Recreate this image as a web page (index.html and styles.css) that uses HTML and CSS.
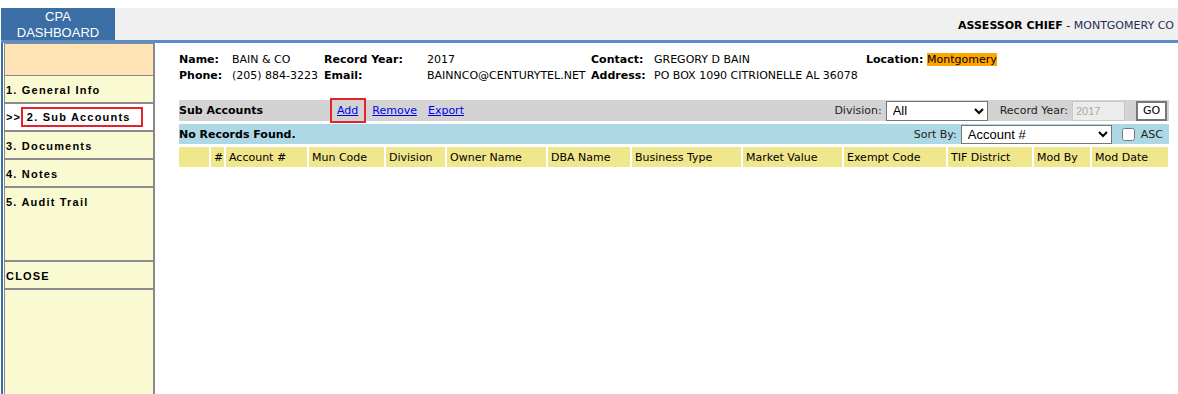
FILE: index.html
```html
<!DOCTYPE html>
<html lang="en">

<head>
    <meta charset="UTF-8">
    <title>CPA Dashboard - Sub Accounts</title>
    <link rel="stylesheet" href="styles.css">
</head>

<body>
    <div class="top-strip"></div>

    <div class="header">
        <div class="tab">CPA<br>DASHBOARD</div>
        <div class="user"><b>ASSESSOR CHIEF</b> - <span class="county">MONTGOMERY CO</span></div>
    </div>

    <div class="page">
        <!-- menu lateral -->
        <div class="side">
            <div class="side-box">
                <div class="side-head"></div>
                <div class="item">1. General Info</div>
                <div class="item active">&gt;&gt;<span class="hl-menu">2. Sub Accounts</span></div>
                <div class="item">3. Documents</div>
                <div class="item">4. Notes</div>
                <div class="item tall">5. Audit Trail</div>
                <div class="item">CLOSE</div>
            </div>
        </div>

        <div class="main">
            <div class="info">
                <b>Name:</b><span>BAIN &amp; CO</span>
                <b>Record Year:</b><span>2017</span>
                <b class="r">Contact:</b><span>GREGORY D BAIN</span>
                <b>Location:</b><span><span class="loc">Montgomery</span></span>

                <b>Phone:</b><span>(205) 884-3223</span>
                <b>Email:</b><span>BAINNCO@CENTURYTEL.NET</span>
                <b class="r">Address:</b><span>PO BOX 1090 CITRIONELLE AL 36078</span>
                <span></span><span></span>
            </div>

            <div class="bar gray">
                <b class="bar-title">Sub Accounts</b>
                <span class="hl-link"><a href="#">Add</a></span>
                <a href="#" class="lnk">Remove</a>
                <a href="#" class="lnk">Export</a>
                <div class="bar-right">
                    <label>Division:</label>
                    <select class="sel sel-div">
                        <option>All</option>
                    </select>
                    <label class="lbl-year">Record Year:</label>
                    <input type="text" class="year" value="2017" disabled>
                    <button type="button" class="go">GO</button>
                </div>
            </div>

            <div class="bar blue">
                <b class="bar-title">No Records Found.</b>
                <div class="bar-right">
                    <label>Sort By:</label>
                    <select class="sel sel-sort">
                        <option>Account #</option>
                    </select>
                    <input type="checkbox" class="chk" id="asc">
                    <label for="asc">ASC</label>
                </div>
            </div>

            <table class="grid">
                <colgroup>
                    <col style="width:31px">
                    <col style="width:15px">
                    <col style="width:83px">
                    <col style="width:77px">
                    <col style="width:61px">
                    <col style="width:101px">
                    <col style="width:84px">
                    <col style="width:111px">
                    <col style="width:101px">
                    <col style="width:104px">
                    <col style="width:86px">
                    <col style="width:58px">
                    <col style="width:77px">
                </colgroup>
                <tr>
                    <th></th>
                    <th>#</th>
                    <th>Account #</th>
                    <th>Mun Code</th>
                    <th>Division</th>
                    <th>Owner Name</th>
                    <th>DBA Name</th>
                    <th>Business Type</th>
                    <th>Market Value</th>
                    <th>Exempt Code</th>
                    <th>TIF District</th>
                    <th>Mod By</th>
                    <th>Mod Date</th>
                </tr>
            </table>
        </div>
    </div>
</body>

</html>
```

FILE: styles.css
```css
* {
    box-sizing: border-box;
}

body {
    margin: 0;
    height: 394px;
    overflow: hidden;
    font-family: "DejaVu Sans", Verdana, sans-serif;
    font-size: 11px;
    color: #000;
    background-color: #fff;
}

.top-strip {
    height: 8px;
}

.header {
    display: flex;
    height: 35px;
    margin-left: 1px;
    background-color: #f0f0f0;
    border-bottom: 3px solid #5b8dc6;
}

.tab {
    width: 114px;
    background-color: #3b6ea5;
    color: #fff;
    font-family: "Liberation Sans", Arial, sans-serif;
    font-size: 13px;
    line-height: 16px;
    text-align: center;
    padding-top: 1px;
}

.user {
    margin-left: auto;
    width: 220px;
    white-space: nowrap;
    padding-top: 11px;
    font-size: 11px;
}

.county {
    color: #1e2b5c;
}

.page {
    display: flex;
    height: 351px;
}

.side {
    margin-left: 1px;
    border-left: 2px solid #3b6ea5;
    padding-left: 1px;
}

.side-box {
    width: 151px;
    height: 100%;
    background-color: #fafad2;
    border: 1px solid #8a8a8a;
    border-width: 1px 2px 0 1px;
}

.side-head {
    height: 32px;
    background-color: #ffe4b5;
    border-bottom: 1px solid #8a8a8a;
}

.item {
    height: 28px;
    padding: 8px 0 0 1px;
    border-bottom: 2px solid #8a8a8a;
    font-family: "Liberation Sans", Arial, sans-serif;
    font-size: 11px;
    font-weight: bold;
    letter-spacing: 1.2px;
}

.item.active {
    background-color: #fff;
    padding-top: 5px;
    letter-spacing: 1px;
}

.item.tall {
    height: 74px;
}

.hl-menu {
    display: inline-block;
    margin-left: 2px;
    padding: 2px 10px 2px 4px;
    outline: 2px solid #e3222b;
    letter-spacing: 1.2px;
}

.main {
    flex: 1;
    padding: 9px 9px 0 24px;
}

.info {
    display: grid;
    grid-template-columns: 53px 92px 103px 164px 63px 212px 61px auto;
    line-height: 16px;
    margin-bottom: 16px;
}

.info .r {
    text-align: right;
    padding-right: 11px;
}

.loc {
    background-color: #ffa500;
}

.bar {
    display: flex;
    align-items: center;
    height: 21px;
    margin-bottom: 3px;
}

.gray {
    background-color: #d3d3d3;
}

.blue {
    background-color: #add8e6;
    height: 20px;
}

.bar-title {
    width: 153px;
}

.bar a {
    color: #0000ee;
}

.hl-link {
    padding: 4px 6px 4px 5px;
    outline: 2px solid #e3222b;
    margin-right: 8px;
}

.lnk {
    margin-right: 11px;
}

.bar-right {
    margin-left: auto;
    display: flex;
    align-items: center;
    padding-right: 2px;
}

.bar-right label {
    margin-right: 4px;
    color: #222;
}

.sel {
    height: 20px;
    font-family: "Liberation Sans", Arial, sans-serif;
    font-size: 13px;
    border: 1px solid #767676;
    background-color: #fff;
    color: #000;
    padding: 0 2px;
}

.sel-div {
    width: 102px;
    margin-right: 12px;
}

.sel-sort {
    width: 151px;
    height: 19px;
}

.year {
    width: 53px;
    height: 20px;
    border: 1px solid #c8c8c8;
    background-color: #ececec;
    color: #a8a8a8;
    font-family: "Liberation Sans", Arial, sans-serif;
    font-size: 11px;
    padding: 0 3px;
    margin-right: 11px;
}

.go {
    width: 31px;
    height: 20px;
    background-color: #fff;
    border: 2px solid #777;
    font-family: "DejaVu Sans", Verdana, sans-serif;
    font-size: 11px;
    padding: 0;
}

.chk {
    width: 13px;
    height: 13px;
    margin: 0 6px 0 10px;
}

.grid {
    width: 989px;
    table-layout: fixed;
    border-collapse: collapse;
}

.grid th {
    height: 20px;
    background-color: #f0e68c;
    border-left: 2px solid #fff;
    font-weight: normal;
    text-align: left;
    padding: 0 3px;
    white-space: nowrap;
    overflow: hidden;
}

.grid th:first-child {
    border-left: none;
}
```
